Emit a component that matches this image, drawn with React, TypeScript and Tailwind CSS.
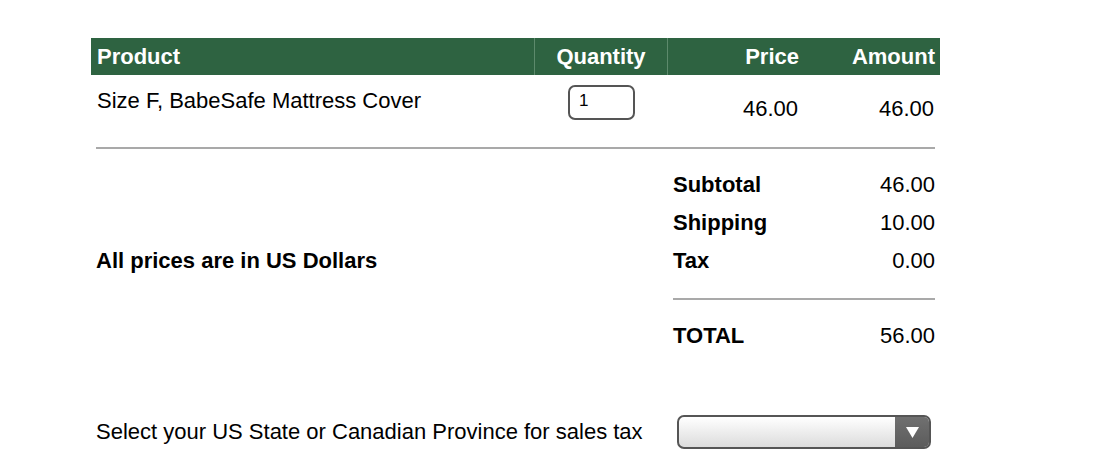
export default function App() {
  return (
    <div className="w-[1109px] h-[464px] bg-white text-black" style={{ fontFamily: '"Liberation Sans", Arial, sans-serif' }}>
      <div className="pl-[91px] pt-[38px] w-[940px]">
        <div className="grid grid-cols-[444px_133px_142px_130px] h-[37px] bg-[#2e6341] text-white font-bold text-[22px] leading-[37px]">
          <div className="pl-[6px] border-r border-[#5d8a6c]">Product</div>
          <div className="text-center border-r border-[#5d8a6c]">Quantity</div>
          <div className="text-right pr-[11px]">Price</div>
          <div className="text-right pr-[5px]">Amount</div>
        </div>
        <div className="grid grid-cols-[444px_133px_142px_130px] text-[22px] leading-[26px] h-[72px]">
          <div className="pl-[6px] pt-[13px]">Size F, BabeSafe Mattress Cover</div>
          <div className="flex justify-center pt-[10px]">
            <div className="w-[67px] h-[35px] border-2 border-[#555] rounded-[7px] text-[17px] leading-[20px] pl-[9px] pt-[4px]">1</div>
          </div>
          <div className="text-right pr-[12px] pt-[21px]">46.00</div>
          <div className="text-right pr-[6px] pt-[21px]">46.00</div>
        </div>
      </div>
      <div className="ml-[96px] w-[839px] h-[2px] bg-[#a9a9a9]" />
      <div className="flex pl-[96px] pt-[23px] text-[22px] leading-[26px]">
        <div className="w-[577px] font-bold pt-[76px]">All prices are in US Dollars</div>
        <div className="w-[262px]">
          <div className="flex justify-between h-[38px]"><span className="font-bold">Subtotal</span><span>46.00</span></div>
          <div className="flex justify-between h-[38px]"><span className="font-bold">Shipping</span><span>10.00</span></div>
          <div className="flex justify-between h-[38px]"><span className="font-bold">Tax</span><span>0.00</span></div>
          <div className="h-[2px] bg-[#a9a9a9] mt-[12px]" />
          <div className="flex justify-between pt-[23px]"><span className="font-bold">TOTAL</span><span>56.00</span></div>
        </div>
      </div>
      <div className="flex items-center pl-[96px] pt-[66px] text-[22px] leading-[26px]">
        <div className="w-[581px]">Select your US State or Canadian Province for sales tax</div>
        <div className="w-[254px] h-[34px] rounded-[7px] border-2 border-[#555] flex overflow-hidden bg-gradient-to-b from-white to-[#dcdcdc]">
          <div className="flex-1" />
          <div className="w-[34px] bg-gradient-to-b from-[#707070] to-[#5c5c5c] flex items-center justify-center">
            <svg width="13" height="11" viewBox="0 0 13 11"><path d="M0 0 H13 L6.5 11 Z" fill="#fff" /></svg>
          </div>
        </div>
      </div>
    </div>
  );
}
